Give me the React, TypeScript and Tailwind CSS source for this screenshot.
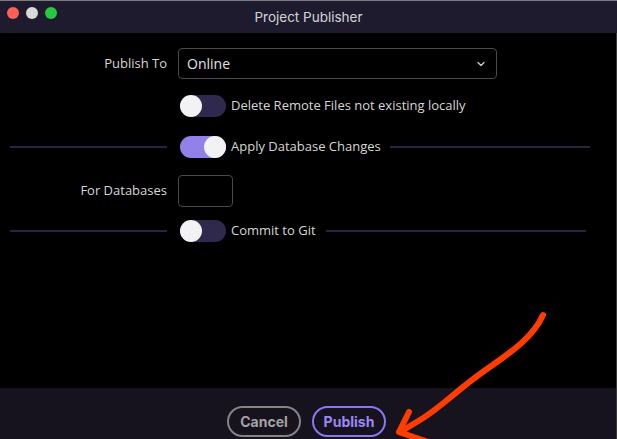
import React from 'react';
import { ChevronDown } from 'lucide-react';

const Toggle: React.FC<{ on?: boolean }> = ({ on }) => (
  <div
    className={`relative ml-[2px] h-[22px] w-[46px] shrink-0 rounded-full ${
      on ? 'bg-[#9281e8]' : 'bg-[#2f2a4d]'
    }`}
  >
    <div
      className={`absolute top-0 h-[22px] w-[22px] rounded-full bg-[#f2f2f4] ${on ? 'right-0' : 'left-0'}`}
    />
  </div>
);

const App: React.FC = () => {
  return (
    <div className="relative flex h-screen w-full flex-col overflow-hidden bg-black font-['Open_Sans',sans-serif] text-[13px] text-[#d6d6d6]">
      {/* title bar */}
      <div className="relative flex h-[33px] shrink-0 items-center justify-center border-t border-[#7a7a82] bg-[#1e1b2f]">
        <div className="absolute left-[7px] top-[6px] flex gap-[7px]">
          <span className="h-[12px] w-[12px] rounded-full bg-[#fe5f57]" />
          <span className="h-[12px] w-[12px] rounded-full bg-[#d9d9d9]" />
          <span className="h-[12px] w-[12px] rounded-full bg-[#28c840]" />
        </div>
        <span className="font-['Inter',sans-serif] text-[13.5px] text-[#d4d4d8]">Project Publisher</span>
      </div>

      {/* body */}
      <div className="flex flex-1 flex-col whitespace-nowrap pl-[10px] pt-[15px]">
        <div className="flex items-center gap-[11px]">
          <div className="w-[157px] shrink-0 text-right">Publish To</div>
          <div className="flex h-[31px] w-[319px] shrink-0 items-center justify-between rounded-[4px] border border-[#4a4a4a] pl-[8px] pr-[9px]">
            <span className="text-[14px] text-[#e4e4e4]">Online</span>
            <ChevronDown size={12} strokeWidth={2.5} className="text-[#cfcfcf]" />
          </div>
        </div>

        <div className="mt-[16px] flex items-center gap-[11px]">
          <div className="w-[157px] shrink-0" />
          <div className="flex items-center gap-[5px]">
            <Toggle />
            <span>Delete Remote Files not existing locally</span>
          </div>
        </div>

        <div className="mt-[19px] flex items-center">
          <div className="h-[2px] w-[157px] shrink-0 bg-[#28263e]" />
          <div className="ml-[11px] flex shrink-0 items-center gap-[5px]">
            <Toggle on />
            <span>Apply Database Changes</span>
          </div>
          <div className="ml-[9px] h-[2px] w-[200px] shrink-0 bg-[#28263e]" />
        </div>

        <div className="mt-[17px] flex items-center gap-[11px]">
          <div className="w-[157px] shrink-0 text-right">For Databases</div>
          <div className="h-[32px] w-[55px] shrink-0 rounded-[4px] border border-[#4a4a4a]" />
        </div>

        <div className="mt-[13px] flex items-center">
          <div className="h-[2px] w-[157px] shrink-0 bg-[#28263e]" />
          <div className="ml-[11px] flex shrink-0 items-center gap-[5px]">
            <Toggle />
            <span>Commit to Git</span>
          </div>
          <div className="ml-[10px] h-[2px] w-[260px] shrink-0 bg-[#28263e]" />
        </div>
      </div>

      {/* footer */}
      <div className="flex h-[51px] shrink-0 justify-center gap-[11px] bg-[#16131f] pr-[4px] pt-[18px] font-['Inter',sans-serif] text-[14px] font-bold">
        <button className="h-[31px] w-[74px] shrink-0 rounded-full border-2 border-[#858585] text-[#a3a3a3]">
          Cancel
        </button>
        <button className="h-[31px] w-[74px] shrink-0 rounded-full border-2 border-[#8b77f0] text-[#9d88f6]">
          Publish
        </button>
      </div>

      {/* right window edge */}
      <div className="absolute right-0 top-[33px] h-full w-px bg-[#3a3a3a]" />

      {/* hand-drawn annotation arrow */}
      <svg className="pointer-events-none absolute inset-0" width="617" height="439" viewBox="0 0 617 439">
        <g fill="none" stroke="#ff3d00" strokeWidth="6" strokeLinecap="round" strokeLinejoin="round">
          <path d="M543 315 C 532 340, 505 356, 480 374 S 440 408, 420 420 S 404 430, 400 432" />
          <path d="M409 412 L 399 432 L 428 442" />
        </g>
      </svg>
    </div>
  );
};

export default App;
